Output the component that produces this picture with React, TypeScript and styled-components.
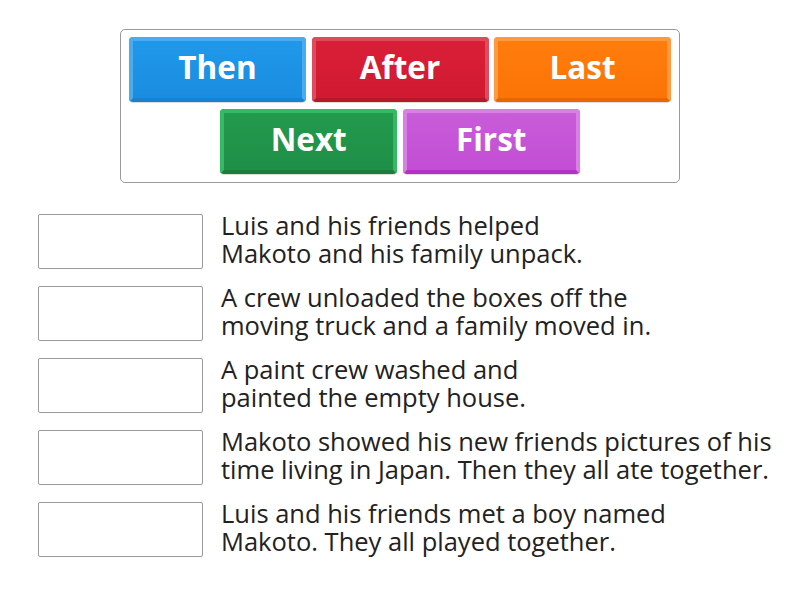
import React from "react";
import styled, { createGlobalStyle } from "styled-components";

const Global = createGlobalStyle`
  body {
    margin: 0;
    background: #ffffff;
    font-family: "Open Sans", "Noto Sans", sans-serif;
  }
`;

const Page = styled.div`
  width: 800px;
  height: 600px;
  padding-top: 29px;
  box-sizing: border-box;
  display: flex;
  flex-direction: column;
  align-items: flex-start;
`;

const Bank = styled.div`
  margin-left: 120px;
  width: 560px;
  height: 154px;
  box-sizing: border-box;
  border: 1px solid #9a9a9a;
  border-radius: 5px;
  padding: 7px 8px 8px;
  display: flex;
  flex-wrap: wrap;
  justify-content: center;
  align-content: flex-start;
  column-gap: 5.5px;
  row-gap: 7px;
`;

type Tone = { face: string; faceDark: string; rim: string; rimBottom: string };

const Tile = styled.div<{ $tone: Tone }>`
  width: 177px;
  height: 65px;
  box-sizing: border-box;
  border-radius: 4px;
  border: 4px solid ${(p) => p.$tone.rim};
  border-bottom-color: ${(p) => p.$tone.rimBottom};
  background: linear-gradient(${(p) => p.$tone.face}, ${(p) => p.$tone.faceDark});
  box-shadow: 0 1px 1px rgba(0, 0, 0, 0.15);
  display: flex;
  align-items: center;
  justify-content: center;
  color: #ffffff;
  font-family: "Open Sans", sans-serif;
  font-weight: 700;
  font-size: 31.5px;
  line-height: 1;
  padding-bottom: 5px;
`;

const List = styled.div`
  margin-top: 31px;
  margin-left: 38px;
  display: flex;
  flex-direction: column;
  gap: 17px;
`;

const Row = styled.div`
  height: 55px;
  display: flex;
  align-items: flex-start;
  gap: 18px;
`;

const Slot = styled.div`
  width: 165px;
  height: 55px;
  box-sizing: border-box;
  border: 1px solid #9a9a9a;
  border-radius: 2px;
  background: #fff;
  flex: none;
`;

const Clue = styled.div`
  margin-top: -3px;
  display: flex;
  flex-direction: column;
  font-family: "Open Sans", sans-serif;
  font-size: 25.5px;
  color: #222;
  white-space: nowrap;
`;

const ClueLine = styled.span`
  display: block;
  height: 28px;
  line-height: 28px;
`;

const tones: Record<string, Tone> = {
  blue: { face: "#2098ea", faceDark: "#1a8de0", rim: "#4caaee", rimBottom: "#1782d0" },
  red: { face: "#d91f37", faceDark: "#d01a31", rim: "#e04a5c", rimBottom: "#b8162b" },
  orange: { face: "#ff7d0c", faceDark: "#fb7406", rim: "#ff9a40", rimBottom: "#e56800" },
  green: { face: "#229a4d", faceDark: "#1f8f47", rim: "#33bb63", rimBottom: "#1a7d3d" },
  purple: { face: "#c95cd9", faceDark: "#c24ed4", rim: "#d880e4", rimBottom: "#b232c8" },
};

const tiles = [
  { label: "Then", tone: tones.blue },
  { label: "After", tone: tones.red },
  { label: "Last", tone: tones.orange },
  { label: "Next", tone: tones.green },
  { label: "First", tone: tones.purple },
];

const clues = [
  ["Luis and his friends helped", "Makoto and his family unpack."],
  ["A crew unloaded the boxes off the", "moving truck and a family moved in."],
  ["A paint crew washed and", "painted the empty house."],
  ["Makoto showed his new friends pictures of his", "time living in Japan. Then they all ate together."],
  ["Luis and his friends met a boy named", "Makoto. They all played together."],
];

export default function App() {
  return (
    <>
      <Global />
      <Page>
        <Bank>
          {tiles.map((t) => (
            <Tile key={t.label} $tone={t.tone}>
              {t.label}
            </Tile>
          ))}
        </Bank>
        <List>
          {clues.map((c, i) => (
            <Row key={i}>
              <Slot />
              <Clue>
                <ClueLine>{c[0]}</ClueLine>
                <ClueLine>{c[1]}</ClueLine>
              </Clue>
            </Row>
          ))}
        </List>
      </Page>
    </>
  );
}
